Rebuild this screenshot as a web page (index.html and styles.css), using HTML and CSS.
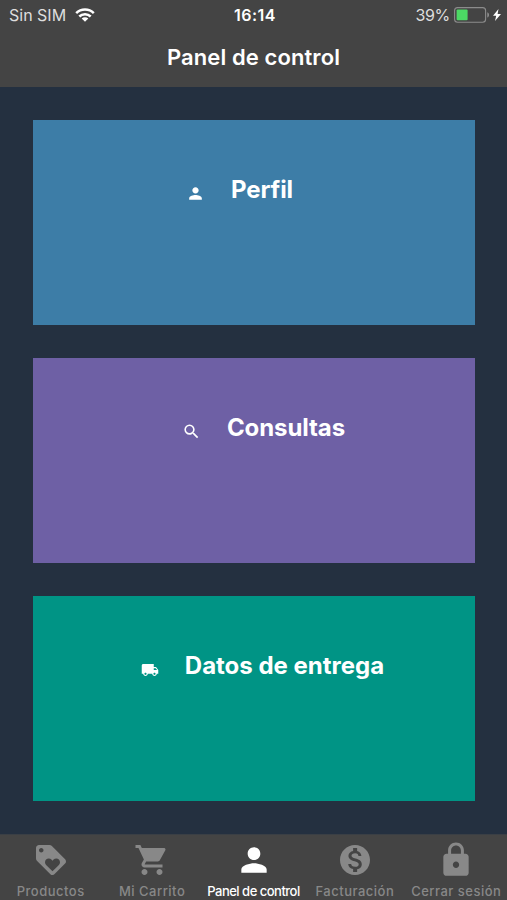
FILE: index.html
```html
<!DOCTYPE html>
<html lang="es">
<head>
<meta charset="utf-8">
<title>Panel de control</title>
<link rel="stylesheet" href="styles.css">
</head>
<body>
<div class="app">
  <header class="header">
    <div class="status">
      <div class="status-left">
        <span class="carrier">Sin SIM</span>
        <svg class="wifi" viewBox="0 0 20 14"><g fill="none" stroke="currentColor" stroke-width="2.5"><path d="M1.2 5.2a12.4 12.4 0 0 1 17.6 0"/><path d="M4.3 8.5a8.1 8.1 0 0 1 11.4 0"/></g><path fill="currentColor" d="M10 13.8 6.7 10.6a4.7 4.7 0 0 1 6.6 0z"/></svg>
      </div>
      <span class="time">16:14</span>
      <div class="status-right">
        <span class="percent">39%</span>
        <svg class="battery" viewBox="0 0 36 16"><rect x=".6" y=".6" width="31" height="14.6" rx="3" fill="none" stroke="#8c8c8c" stroke-width="1.1"/><rect x="2.6" y="2.6" width="11" height="10.6" rx="1" fill="#4cd964"/><path d="M33.4 5.2c2 .8 2 4.6 0 5.4z" fill="#999"/></svg>
        <svg class="bolt" viewBox="0 0 8 12"><path fill="currentColor" d="M5.5 0 0 6.8h3.2L2 12l6-7.1H4.6z"/></svg>
      </div>
    </div>
    <h1 class="title">Panel de control</h1>
  </header>

  <main class="cards">
    <a class="card profile">
      <svg class="card-icon" viewBox="0 0 24 24"><path d="M12 12c2.21 0 4-1.79 4-4s-1.790-4-4-4-4 1.790-4 4 1.790 4 4 4zm0 2c-2.670 0-8 1.340-8 4v2h16v-2c0-2.660-5.330-4-8-4z"/></svg>
      <span class="card-label">Perfil</span>
    </a>
    <a class="card queries">
      <svg class="card-icon" viewBox="0 0 24 24"><path d="M15.5 14h-.79l-.28-.27A6.471 6.471 0 0 0 16 9.500 6.500 6.500 0 1 0 9.500 16c1.610 0 3.090-.59 4.230-1.570l.27.28v.79l5 4.990L20.490 19l-4.990-5zm-6 0C7.010 14 5 11.990 5 9.500S7.010 5 9.500 5 14 7.010 14 9.500 11.990 14 9.500 14z"/></svg>
      <span class="card-label">Consultas</span>
    </a>
    <a class="card delivery">
      <svg class="card-icon" viewBox="0 0 24 24"><path d="M20 8h-3V4H3c-1.100 0-2 .9-2 2v11h2c0 1.660 1.340 3 3 3s3-1.340 3-3h6c0 1.660 1.340 3 3 3s3-1.340 3-3h2v-5l-3-4zM6 18.500c-.83 0-1.500-.67-1.500-1.500s.67-1.500 1.500-1.500 1.500.67 1.500 1.500-.67 1.500-1.500 1.500zm13.500-9l1.960 2.500H17V9.500h2.500zm-1.500 9c-.83 0-1.500-.67-1.500-1.500s.67-1.500 1.500-1.500 1.500.67 1.500 1.500-.67 1.500-1.500 1.500z"/></svg>
      <span class="card-label">Datos de entrega</span>
    </a>
  </main>

  <nav class="tabs">
    <a class="tab">
      <span class="tab-icon"><svg viewBox="0 0 24 24"><path d="M21.410 11.580l-9-9C12.050 2.220 11.550 2 11 2H4c-1.100 0-2 .9-2 2v7c0 .55.22 1.050.59 1.420l9 9c.36.36.86.58 1.410.58s1.050-.22 1.410-.59l7-7c.37-.36.59-.86.59-1.410s-.23-1.060-.59-1.420zM5.500 7C4.670 7 4 6.330 4 5.500S4.670 4 5.500 4 7 4.670 7 5.500 6.330 7 5.500 7zm11.770 8.270L13 19.540l-4.270-4.270C8.280 14.810 8 14.190 8 13.500c0-1.380 1.120-2.500 2.500-2.500.69 0 1.320.28 1.770.74l.73.72.73-.73c.45-.45 1.080-.73 1.770-.73 1.380 0 2.500 1.120 2.500 2.500 0 .69-.28 1.320-.73 1.770z"/></svg></span>
      <span class="tab-label">Productos</span>
    </a>
    <a class="tab">
      <span class="tab-icon"><svg viewBox="0 0 24 24"><path d="M7 18c-1.100 0-1.990.9-1.990 2S5.900 22 7 22s2-.9 2-2-.9-2-2-2zM1 2v2h2l3.600 7.590-1.350 2.450c-.16.28-.25.61-.25.96 0 1.100.9 2 2 2h12v-2H7.420c-.14 0-.25-.11-.25-.25l.03-.12.900-1.630h7.450c.75 0 1.410-.41 1.750-1.030l3.580-6.490c.08-.14.12-.31.12-.48 0-.55-.45-1-1-1H5.210l-.94-2H1zm16 16c-1.100 0-1.990.9-1.990 2s.89 2 1.990 2 2-.9 2-2-.9-2-2-2z"/></svg></span>
      <span class="tab-label">Mi Carrito</span>
    </a>
    <a class="tab active">
      <span class="tab-icon"><svg class="large" viewBox="0 0 24 24"><path d="M12 12c2.210 0 4-1.790 4-4s-1.790-4-4-4-4 1.790-4 4 1.790 4 4 4zm0 2c-2.670 0-8 1.340-8 4v2h16v-2c0-2.660-5.330-4-8-4z"/></svg></span>
      <span class="tab-label">Panel de control</span>
    </a>
    <a class="tab">
      <span class="tab-icon"><svg viewBox="0 0 24 24"><path d="M12 2C6.480 2 2 6.480 2 12s4.480 10 10 10 10-4.480 10-10S17.520 2 12 2zm1.410 16.090V20h-2.670v-1.930c-1.710-.36-3.160-1.460-3.270-3.400h1.960c.1 1.050.82 1.870 2.650 1.870 1.960 0 2.400-.98 2.400-1.590 0-.83-.44-1.610-2.670-2.140-2.480-.6-4.180-1.620-4.180-3.670 0-1.720 1.390-2.840 3.110-3.210V4h2.670v1.950c1.860.45 2.790 1.860 2.850 3.390H14.300c-.05-1.110-.64-1.870-2.220-1.870-1.500 0-2.400.68-2.400 1.640 0 .84.65 1.390 2.670 1.910s4.180 1.390 4.180 3.910c-.01 1.830-1.380 2.830-3.120 3.160z"/></svg></span>
      <span class="tab-label">Facturación</span>
    </a>
    <a class="tab">
      <span class="tab-icon"><svg class="large" viewBox="0 0 24 24"><path d="M18 8h-1V6c0-2.760-2.240-5-5-5S7 3.240 7 6v2H6c-1.100 0-2 .9-2 2v10c0 1.100.9 2 2 2h12c1.100 0 2-.9 2-2V10c0-1.100-.9-2-2-2zm-6 9c-1.100 0-2-.9-2-2s.9-2 2-2 2 .9 2 2-.9 2-2 2zm3.100-9H8.900V6c0-1.710 1.390-3.100 3.100-3.100s3.100 1.390 3.100 3.100v2z"/></svg></span>
      <span class="tab-label">Cerrar sesión</span>
    </a>
  </nav>
</div>
</body>
</html>
```

FILE: styles.css
```css
* { box-sizing: border-box; }

body {
  margin: 0;
  font-family: Inter, "Liberation Sans", sans-serif;
  color: #fff;
  background: #243040;
}

svg { display: block; }

.app {
  display: flex;
  flex-direction: column;
  height: 900px;
  overflow: hidden;
}

.header {
  height: 87px;
  background: #444;
}

.status {
  display: grid;
  grid-template-columns: 1fr auto 1fr;
  align-items: center;
  height: 30px;
  padding: 0 6px 0 9px;
  font-size: 16px;
}

.status-left,
.status-right {
  display: flex;
  align-items: center;
}

.status-right { justify-content: flex-end; }

.carrier { color: #dedede; letter-spacing: 0; }
.wifi { width: 20px; height: 14px; margin-left: 9px; }
.time { font-weight: 600; letter-spacing: 0.5px; }
.percent { color: #dedede; letter-spacing: -0.3px; }
.battery { width: 36px; height: 16px; margin-left: 4px; }
.bolt { width: 8px; height: 12px; margin-left: 3px; }

.title {
  margin: 12px 0 0;
  font-size: 22px;
  line-height: 30px;
  font-weight: 600;
  letter-spacing: 0.1px;
  text-align: center;
}

.cards {
  display: flex;
  flex: 1;
  flex-direction: column;
  gap: 33px;
  padding: 33px 32px 33px 33px;
}

.card {
  display: flex;
  flex: 1;
  align-items: flex-start;
  justify-content: center;
  padding-top: 54px;
}

.profile { background: #3d7da7; padding-right: 28px; }
.queries { background: #6e60a5; padding-left: 20px; }
.delivery { background: #009485; padding-left: 17px; }

.card-icon {
  width: 19px;
  height: 19px;
  margin: 10px 26px 0 -1px;
  fill: currentColor;
}

.delivery .card-icon { width: 18px; height: 18px; margin: 11px 26px 0 0; }

.card-label {
  font-size: 24px;
  line-height: 32px;
  font-weight: 700;
  letter-spacing: -0.1px;
  white-space: nowrap;
}

.delivery .card-label { letter-spacing: 0; }

.tabs {
  display: grid;
  grid-template-columns: repeat(5, 1fr);
  height: 66px;
  background: #444;
  border-top: 1px solid #3a3f45;
}

.tab {
  display: flex;
  flex-direction: column;
  align-items: center;
  color: #888;
}

.tab-icon {
  display: flex;
  align-items: center;
  height: 49px;
}

.tab-icon svg { width: 36px; height: 36px; fill: currentColor; }
.tab-icon .large { width: 38px; height: 38px; }

.tab-label {
  margin-top: -1px;
  font-size: 13px;
  line-height: 16px;
  font-weight: 500;
  letter-spacing: 0.5px;
  white-space: nowrap;
}

.active { color: #fff; }
.active .tab-icon { padding-left: 1px; }
.active .tab-label { letter-spacing: -0.5px; }
```
